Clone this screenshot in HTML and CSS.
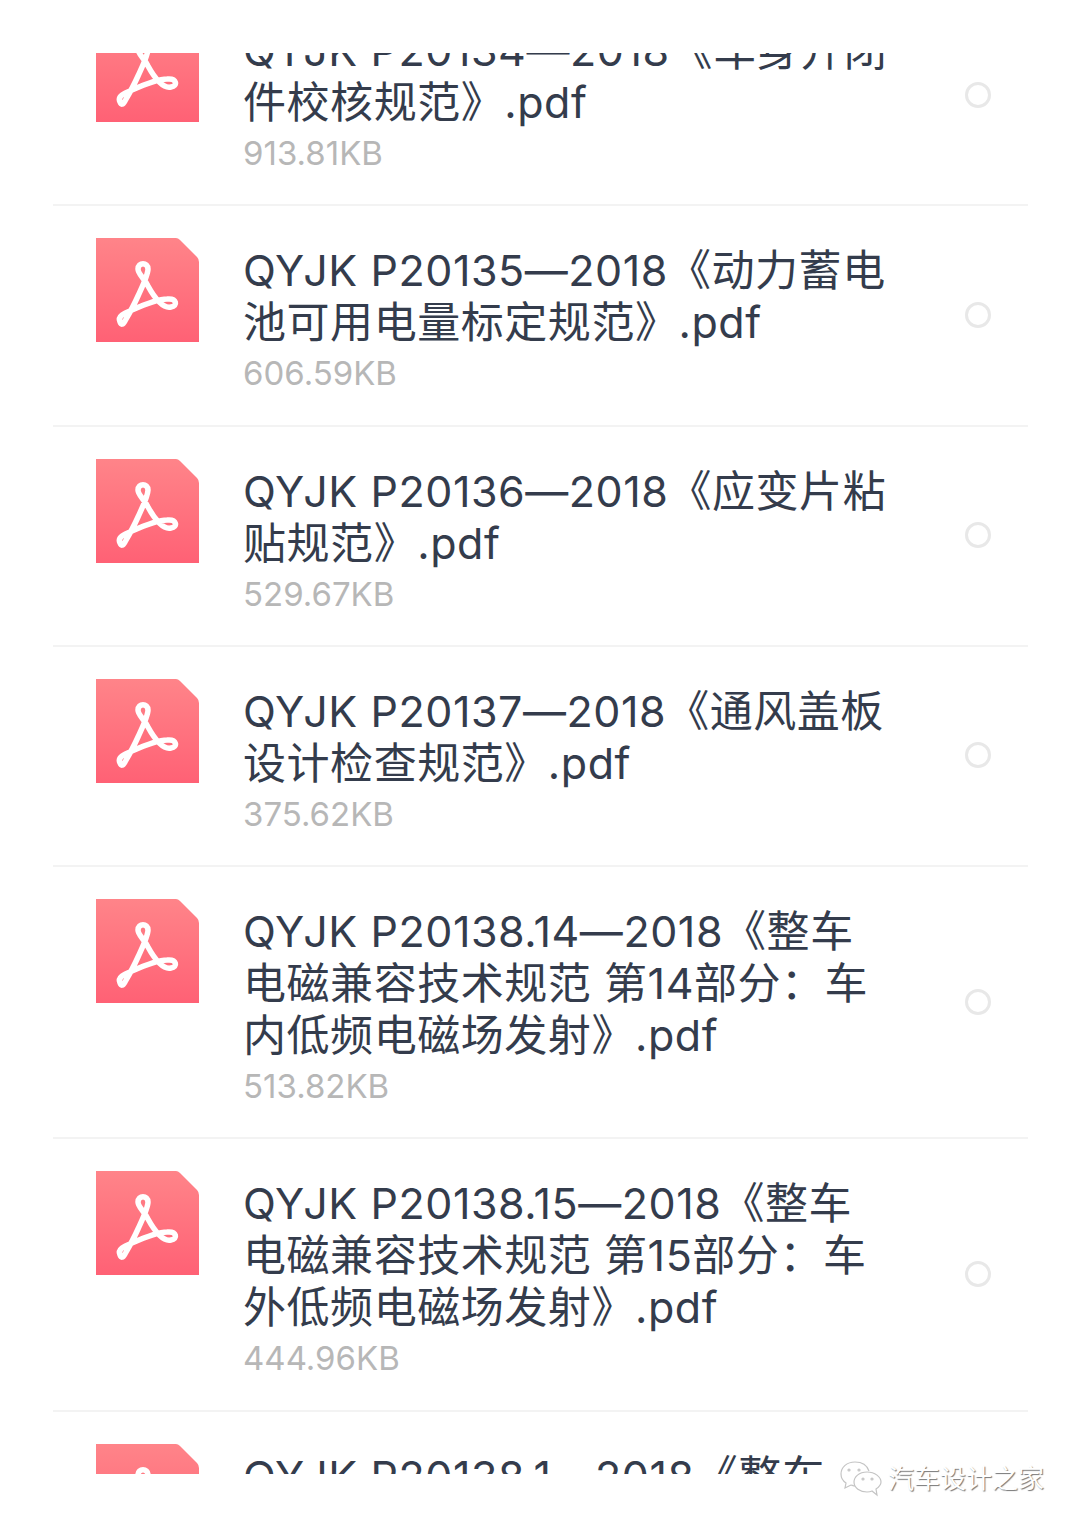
FILE: index.html
```html
<!DOCTYPE html>
<html>
<head>
    <title>文件列表</title>
    <link rel="stylesheet" href="styles.css">
</head>
<body>
    <svg class="defs" width="0" height="0">
        <defs>
            <linearGradient id="pdfFill" x1="0" y1="0" x2="0" y2="1">
                <stop offset="0" stop-color="#ff8489"/>
                <stop offset="1" stop-color="#ff6175"/>
            </linearGradient>
            <symbol id="pdfIcon" viewBox="0 0 103 104">
                <path d="M0 0H80Q82 0 84 2L101 19Q103 21 103 24V104H0Z" fill="url(#pdfFill)"/>
                <path class="pdf-mark" d="M24 84C21 78 29 75 36 72C45 68 61 61 71 61C81 60 82 68 75 69C67 71 58 59 52 48C48 40 42 36 42 31C42 24 52 24 52 31C52 37 47 47 42 58C38 67 33 76 29 83C27 87 25 87 24 84Z"/>
            </symbol>
        </defs>
    </svg>

    <div class="list">
        <div class="list-inner">
            <div class="row">
                <svg class="pdf"><use href="#pdfIcon"/></svg>
                <div class="info">
                    <div class="title">QYJK P20134—2018《车身开闭<br>件校核规范》.pdf</div>
                    <div class="size">913.81KB</div>
                </div>
                <span class="radio"></span>
            </div>
            <div class="row">
                <svg class="pdf"><use href="#pdfIcon"/></svg>
                <div class="info">
                    <div class="title">QYJK P20135—2018《动力蓄电<br>池可用电量标定规范》.pdf</div>
                    <div class="size">606.59KB</div>
                </div>
                <span class="radio"></span>
            </div>
            <div class="row">
                <svg class="pdf"><use href="#pdfIcon"/></svg>
                <div class="info">
                    <div class="title">QYJK P20136—2018《应变片粘<br>贴规范》.pdf</div>
                    <div class="size">529.67KB</div>
                </div>
                <span class="radio"></span>
            </div>
            <div class="row">
                <svg class="pdf"><use href="#pdfIcon"/></svg>
                <div class="info">
                    <div class="title">QYJK P20137—2018《通风盖板<br>设计检查规范》.pdf</div>
                    <div class="size">375.62KB</div>
                </div>
                <span class="radio"></span>
            </div>
            <div class="row">
                <svg class="pdf"><use href="#pdfIcon"/></svg>
                <div class="info">
                    <div class="title">QYJK P20138.14—2018《整车<br>电磁兼容技术规范 第14部分：车<br>内低频电磁场发射》.pdf</div>
                    <div class="size">513.82KB</div>
                </div>
                <span class="radio"></span>
            </div>
            <div class="row">
                <svg class="pdf"><use href="#pdfIcon"/></svg>
                <div class="info">
                    <div class="title">QYJK P20138.15—2018《整车<br>电磁兼容技术规范 第15部分：车<br>外低频电磁场发射》.pdf</div>
                    <div class="size">444.96KB</div>
                </div>
                <span class="radio"></span>
            </div>
            <div class="row">
                <svg class="pdf"><use href="#pdfIcon"/></svg>
                <div class="info">
                    <div class="title">QYJK P20138.1—2018《整车</div>
                </div>
            </div>
        </div>
    </div>

    <div class="watermark">
        <svg class="wechat" viewBox="0 0 42 36">
            <path d="M15 1C7 1 1 6 1 13C1 17 3 20 6 22L5 27L11 24C12 24 13 25 15 25"/>
            <path d="M15 1C22 1 27 4 29 10"/>
            <path d="M27 11C19 11 14 16 14 21C14 27 20 31 27 31C29 31 30 31 32 30L37 34L36 28C39 26 41 24 41 21C41 16 35 11 27 11Z"/>
            <circle cx="9" cy="9" r="1"/>
            <circle cx="19" cy="9" r="1"/>
            <circle cx="23" cy="18" r="1"/>
            <circle cx="32" cy="18" r="1"/>
        </svg>
        <span class="mark-text">汽车设计之家</span>
    </div>
</body>
</html>
```

FILE: styles.css
```css
body {
    margin: 0;
    height: 1527px;
    position: relative;
    overflow: hidden;
    background: #fff;
    font-family: Inter, "Noto Sans CJK SC", sans-serif;
}
.defs {
    display: block;
    height: 0;
}
.list {
    margin: 53px 52px 0 53px;
    height: 1421px;
    overflow: hidden;
}
.list-inner {
    margin-top: -67px;
}
.row {
    display: flex;
    padding: 32px 37px 26.3px 43px;
    border-bottom: 2px solid #f3f3f3;
}
.pdf {
    width: 103px;
    height: 104px;
    flex: none;
}
.pdf-mark {
    fill: none;
    stroke: #fff;
    stroke-width: 5.5;
}
.info {
    margin: 6px 0 0 44px;
    flex: 1;
}
.title {
    font-size: 43px;
    line-height: 52px;
    letter-spacing: 0.55px;
    color: #343c4c;
    white-space: nowrap;
}
.size {
    font-size: 33px;
    line-height: 50px;
    color: #b7b7b7;
}
.radio {
    width: 20px;
    height: 20px;
    margin-bottom: 7px;
    border: 3px solid #e8e8e8;
    border-radius: 50%;
    align-self: center;
    flex: none;
}
.watermark {
    position: absolute;
    left: 840px;
    top: 1461px;
    display: flex;
    align-items: center;
    gap: 6px;
}
.wechat {
    width: 42px;
    height: 36px;
    fill: none;
    stroke: #c4c4c4;
    stroke-width: 1.2;
}
.mark-text {
    font-size: 26px;
    line-height: 36px;
    color: #fff;
    text-shadow: 1px 1px 1px #777;
}
```
